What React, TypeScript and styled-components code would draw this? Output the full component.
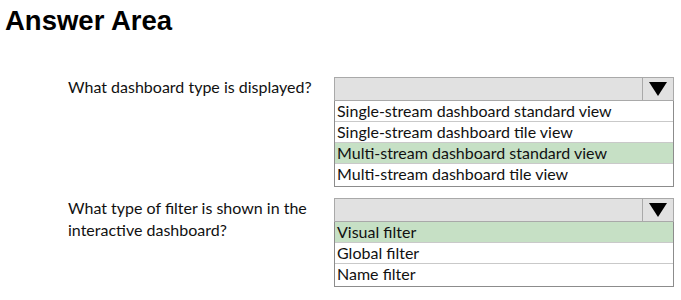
import styled, { createGlobalStyle } from "styled-components";

const GlobalStyle = createGlobalStyle`
  html, body {
    margin: 0;
    padding: 0;
    background: #fff;
  }
  body {
    width: 681px;
    height: 300px;
    overflow: hidden;
  }
`;

type Question = {
  label: string[];
  options: string[];
  selected: number;
};

const questions: Question[] = [
  {
    label: ["What dashboard type is displayed?"],
    options: [
      "Single-stream dashboard standard view",
      "Single-stream dashboard tile view",
      "Multi-stream dashboard standard view",
      "Multi-stream dashboard tile view",
    ],
    selected: 2,
  },
  {
    label: ["What type of filter is shown in the", "interactive dashboard?"],
    options: ["Visual filter", "Global filter", "Name filter"],
    selected: 0,
  },
];

export default function App() {
  return (
    <Page>
      <GlobalStyle />
      <Title>Answer Area</Title>
      <Questions>
        {questions.map((q, i) => (
          <Row key={i}>
            <Label>
              {q.label.map((line) => (
                <div key={line}>{line}</div>
              ))}
            </Label>
            <Dropdown>
              <Header>
                <HeaderBlank />
                <ArrowCell>
                  <svg width="18" height="14" viewBox="0 0 18 14">
                    <path d="M0 0 H18 L9 14 Z" fill="#000" />
                  </svg>
                </ArrowCell>
              </Header>
              <Options>
                {q.options.map((opt, j) => (
                  <Option key={opt} $active={j === q.selected}>
                    {opt}
                  </Option>
                ))}
              </Options>
            </Dropdown>
          </Row>
        ))}
      </Questions>
    </Page>
  );
}

const Page = styled.div`
  width: 681px;
  height: 300px;
  box-sizing: border-box;
  padding: 5px 0 0 5px;
  background: #fff;
`;

const Title = styled.h1`
  margin: 0;
  font-family: "Liberation Sans", Arial, sans-serif;
  font-weight: 700;
  font-size: 27.5px;
  line-height: 32px;
  color: #000;
`;

const Questions = styled.div`
  display: flex;
  flex-direction: column;
  gap: 11px;
  margin-top: 40px;
`;

const Row = styled.div`
  display: flex;
  align-items: flex-start;
`;

const Label = styled.div`
  width: 266px;
  box-sizing: content-box;
  padding-left: 63px;
  padding-right: 0;
  margin-top: -1px;
  font-family: Lato, "Open Sans", sans-serif;
  font-size: 16px;
  line-height: 22px;
  color: #111;
`;

const Dropdown = styled.div`
  width: 340px;
  display: flex;
  flex-direction: column;
`;

const Header = styled.div`
  display: flex;
  height: 24px;
  box-sizing: border-box;
  border: 1px solid #a9a9a9;
  background: #e1e1e1;
`;

const HeaderBlank = styled.div`
  flex: 1;
`;

const ArrowCell = styled.div`
  width: 30px;
  border-left: 1px solid #a9a9a9;
  display: flex;
  align-items: center;
  justify-content: center;
`;

const Options = styled.div`
  border: 1px solid #8c8c8c;
  border-top: none;
  padding-bottom: 2px;
  background: #fff;
`;

const Option = styled.div<{ $active: boolean }>`
  height: 20px;
  line-height: 20px;
  padding-left: 2px;
  font-family: Lato, "Open Sans", sans-serif;
  font-size: 16px;
  color: #111;
  background: ${(p) => (p.$active ? "#c6e0c5" : "#fff")};
  border-bottom: 1px solid #c9c9c9;
  white-space: nowrap;
  &:last-child {
    border-bottom: none;
  }
`;
